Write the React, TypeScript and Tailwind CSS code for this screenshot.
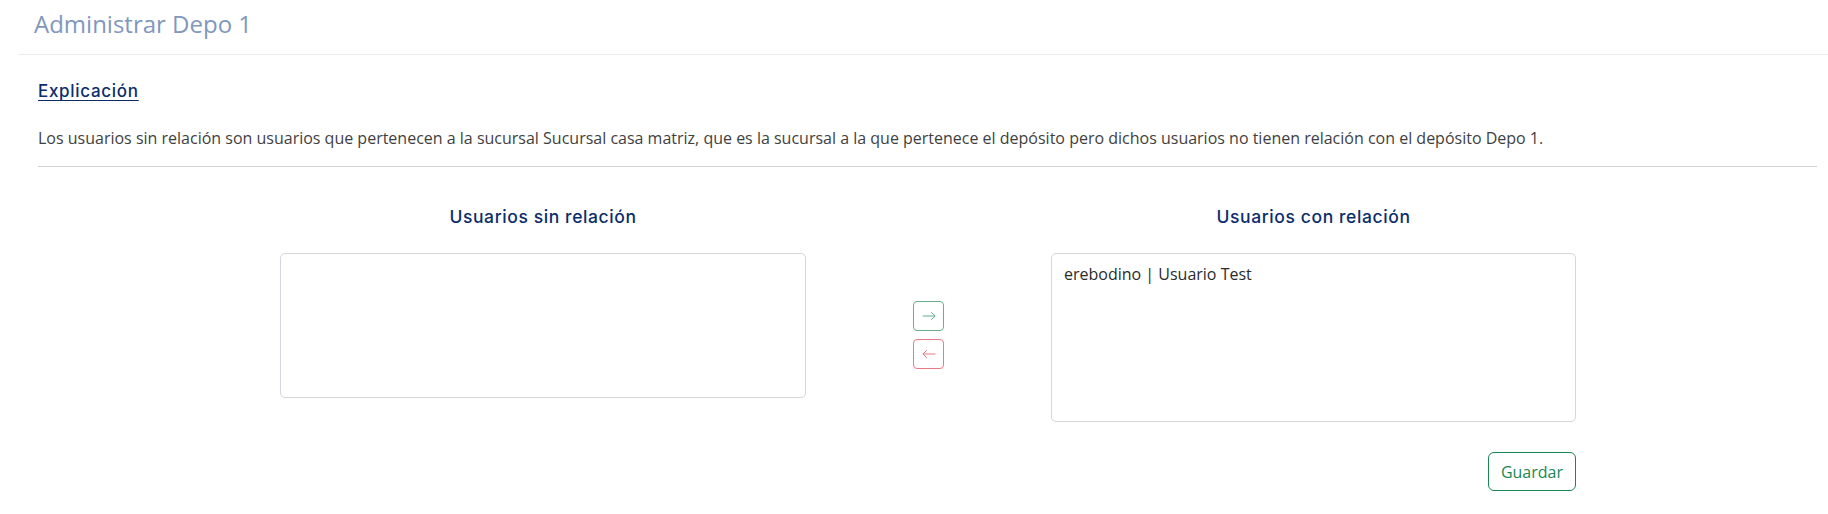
import React from 'react';

const ArrowIcon: React.FC<{ dir: 'right' | 'left' }> = ({ dir }) => (
  <svg width="14" height="10" viewBox="0 0 14 10" fill="none" stroke="currentColor" strokeWidth="1" strokeLinecap="round">
    {dir === 'right' ? (
      <>
        <path d="M1 5h12" />
        <path d="M9.5 1.5L13 5l-3.5 3.5" />
      </>
    ) : (
      <>
        <path d="M13 5H1" />
        <path d="M4.5 1.5L1 5l3.5 3.5" />
      </>
    )}
  </svg>
);

const App: React.FC = () => {
  const conRelacion = ['erebodino | Usuario Test'];

  return (
    <div className="min-h-screen bg-white font-['Open_Sans',sans-serif] text-[#3f3f3f]">
      <div className="pl-[18px]">
        {/* Header */}
        <div className="h-[55px] border-b border-[#ececec] flex items-center pl-[16px]">
          <h1 className="text-[24px] leading-[32px] text-[#8197bd] pb-[6px]">Administrar Depo 1</h1>
        </div>

        <div className="pl-[20px] pr-[11px]">
          {/* Explicacion */}
          <div className="mt-[24px] font-['Inter',sans-serif] font-medium text-[17px] tracking-[0.7px] leading-[24px] text-[#0b2d6b] underline underline-offset-[3px]">
            Explicación
          </div>
          <p className="mt-[23px] text-[16px] leading-[24px]">
            Los usuarios sin relación son usuarios que pertenecen a la sucursal Sucursal casa matriz, que es la sucursal a la que pertenece el depósito pero dichos usuarios no tienen relación con el depósito Depo 1.
          </p>
          <div className="mt-[16px] border-t border-[#d2d2d2]" />

          {/* Listas */}
          <div className="flex pl-[242px] mt-[38px]">
            <div className="w-[526px] flex flex-col">
              <h2 className="text-center font-['Inter',sans-serif] font-medium text-[17.5px] tracking-[0.6px] leading-[24px] text-[#0b2d6b]">
                Usuarios sin relación
              </h2>
              <div className="mt-[24px] h-[145px] border border-[#d3d6dc] rounded-[5px] bg-white" />
            </div>

            <div className="w-[245px] flex flex-col items-center pt-[96px] gap-[8px]">
              <button className="w-[31px] h-[30px] flex items-center justify-center border border-[#198754] text-[#198754] rounded-[4px] opacity-65">
                <ArrowIcon dir="right" />
              </button>
              <button className="w-[31px] h-[30px] flex items-center justify-center border border-[#dc3545] text-[#dc3545] rounded-[4px] opacity-65">
                <ArrowIcon dir="left" />
              </button>
            </div>

            <div className="w-[525px] flex flex-col">
              <h2 className="text-center font-['Inter',sans-serif] font-medium text-[17.5px] tracking-[0.6px] leading-[24px] text-[#0b2d6b]">
                Usuarios con relación
              </h2>
              <div className="mt-[24px] h-[169px] border border-[#d3d6dc] rounded-[5px] bg-white px-[12px] py-[8px]">
                {conRelacion.map((u) => (
                  <div key={u} className="text-[16px] leading-[24px] text-[#2b2b2b]">{u}</div>
                ))}
              </div>
              <div className="flex justify-end mt-[30px]">
                <button className="h-[39px] px-[12px] border border-[#198754] text-[#198754] rounded-[6px] text-[16px] leading-[24px]">
                  Guardar
                </button>
              </div>
            </div>
          </div>
        </div>
      </div>
    </div>
  );
};

export default App;
